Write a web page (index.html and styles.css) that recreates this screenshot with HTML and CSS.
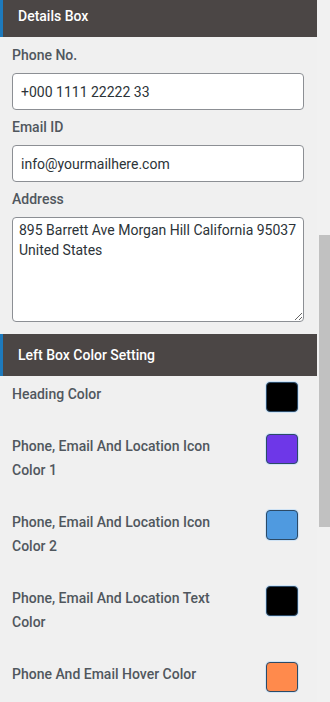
FILE: index.html
```html
<!DOCTYPE html>
<html>
<head>
<meta charset="utf-8">
<link rel="stylesheet" href="styles.css">
</head>
<body>
<div class="page">
  <div class="panel">
    <div class="section-head">Details Box</div>
    <div class="fields">
      <label class="field-label">Phone No.</label>
      <input class="text-input" type="text" value="+000 1111 22222 33">
      <label class="field-label">Email ID</label>
      <input class="text-input" type="text" value="info@yourmailhere.com">
      <label class="field-label">Address</label>
      <textarea class="text-area">895 Barrett Ave Morgan Hill California 95037 United States</textarea>
    </div>
    <div class="section-head">Left Box Color Setting</div>
    <div class="colors">
      <div class="color-row">
        <span class="color-label">Heading Color</span>
        <span class="swatch swatch-black"></span>
      </div>
      <div class="color-row">
        <span class="color-label">Phone, Email And Location Icon Color 1</span>
        <span class="swatch swatch-purple"></span>
      </div>
      <div class="color-row">
        <span class="color-label">Phone, Email And Location Icon Color 2</span>
        <span class="swatch swatch-blue"></span>
      </div>
      <div class="color-row">
        <span class="color-label">Phone, Email And Location Text Color</span>
        <span class="swatch swatch-black"></span>
      </div>
      <div class="color-row">
        <span class="color-label">Phone And Email Hover Color</span>
        <span class="swatch swatch-orange"></span>
      </div>
    </div>
  </div>
  <div class="scrollbar"><div class="scroll-thumb"></div></div>
</div>
</body>
</html>
```

FILE: styles.css
```css
* { box-sizing: border-box; }
html, body {
  margin: 0;
  padding: 0;
  height: 702px;
  overflow: hidden;
  background: #f0f0f0;
  font-family: Roboto, "Liberation Sans", sans-serif;
}
.page {
  display: flex;
  width: 330px;
  height: 702px;
  overflow: hidden;
}
.panel {
  width: 317px;
  flex: none;
  margin-top: -5px;
}
.section-head {
  height: 42px;
  background: #4b4645;
  border-left: 3px solid #1d7abd;
  color: #ffffff;
  font-size: 14px;
  font-weight: 500;
  line-height: 42px;
  padding-left: 15px;
}
.fields {
  display: flex;
  flex-direction: column;
  padding: 6px 13px 12px 12px;
}
.field-label {
  font-size: 14px;
  font-weight: 500;
  line-height: 24px;
  color: #50575e;
  margin-bottom: 6px;
}
.text-input {
  height: 37px;
  width: 100%;
  border: 1px solid #8c8f94;
  border-radius: 4px;
  background: #ffffff;
  padding: 0 8px;
  font-family: Roboto, "Liberation Sans", sans-serif;
  font-size: 14px;
  color: #2c3338;
  margin: 0 0 5px 0;
}
.text-area {
  height: 105px;
  width: 100%;
  border: 1px solid #8c8f94;
  border-radius: 4px;
  background: #ffffff;
  padding: 2px 6px;
  font-family: Roboto, "Liberation Sans", sans-serif;
  font-size: 14px;
  line-height: 20px;
  color: #2c3338;
  margin: 0;
  display: block;
}
.colors {
  padding: 6px 19px 0 12px;
  display: flex;
  flex-direction: column;
}
.color-row {
  display: flex;
  justify-content: space-between;
  align-items: flex-start;
  padding-bottom: 28px;
}
.color-label {
  width: 225px;
  font-size: 14px;
  font-weight: 500;
  line-height: 24px;
  color: #50575e;
}
.swatch {
  width: 32px;
  height: 30px;
  margin-bottom: -6px;
  border: 1px solid #2c4a66;
  border-radius: 4px;
  box-shadow: 0 0 0 1px #cfe3f5;
}
.swatch-black { background: #000000; }
.swatch-purple { background: #6e37e8; }
.swatch-blue { background: #4f9ae0; }
.swatch-orange { background: #ff8a4c; }
.scrollbar {
  width: 13px;
  flex: none;
  background: #f1f1f1;
  padding-top: 235px;
  padding-left: 2px;
}
.scroll-thumb {
  height: 292px;
  background: #c1c1c1;
}
```
